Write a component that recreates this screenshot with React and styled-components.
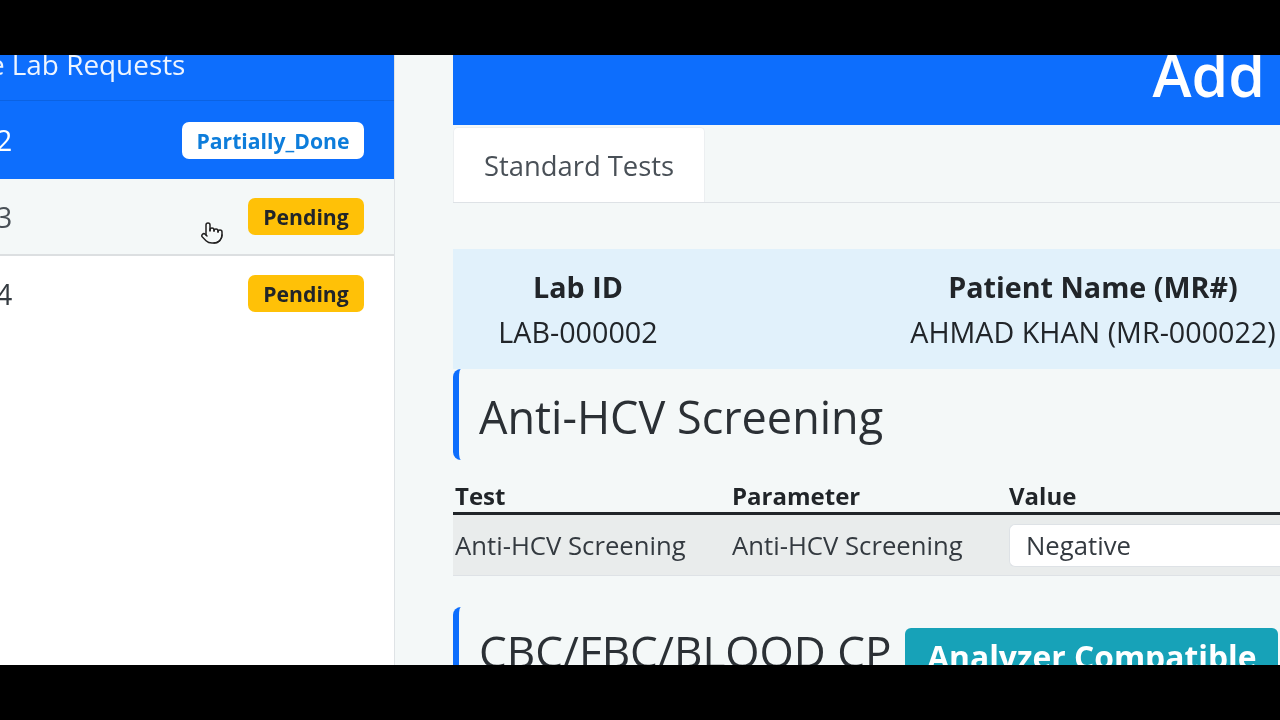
import React from 'react'
import styled, { createGlobalStyle } from 'styled-components'
import { Pointer } from 'lucide-react'

const Global = createGlobalStyle`
  html, body { margin: 0; padding: 0; background: #000; }
  body { font-family: 'Open Sans', 'Noto Sans', sans-serif; color: #212529; }
`

const Screen = styled.div`
  width: 1280px;
  height: 720px;
  padding: 55px 0;
  box-sizing: border-box;
  background: #000;
`

const Frame = styled.div`
  position: relative;
  display: flex;
  height: 610px;
  overflow: hidden;
  background: #f4f8f8;
  filter: blur(0.4px);
`

const Sidebar = styled.aside`
  flex: 0 0 395px;
  box-sizing: border-box;
  background: #fff;
  border-right: 1px solid #dfe3e6;
  overflow: hidden;
`

const SideList = styled.div`
  width: 594px;
  margin-left: -200px;
`

const SideHeader = styled.div`
  height: 46px;
  box-sizing: border-box;
  background: #0d6efd;
  border-bottom: 1px solid #0b62e2;
  color: #eef5ff;
  font-size: 27.9px;
  line-height: 18px;
  padding-left: 127px;
  white-space: nowrap;
`

const Row = styled.div`
  display: flex;
  justify-content: space-between;
  align-items: center;
  box-sizing: border-box;
  height: ${p => p.$height}px;
  padding: 0 30px 0 54px;
  font-size: 28.5px;
  background: ${p => p.$bg};
  color: ${p => p.$color};
  border-bottom: ${p => p.$line ? '2px solid #dcdfe1' : 'none'};
`

const Badge = styled.span`
  display: flex;
  align-items: center;
  justify-content: center;
  height: 37px;
  width: ${p => p.$width}px;
  border-radius: 7px;
  font-size: 21.2px;
  font-weight: 700;
  background: ${p => p.$bg};
  color: ${p => p.$color};
`

const Main = styled.main`
  flex: 1;
  min-width: 0;
  padding-left: 58px;
  overflow: hidden;
`

const TopBar = styled.div`
  height: 70px;
  background: #0d6efd;
  color: #fff;
  display: flex;
  justify-content: flex-end;
  align-items: flex-start;
  padding-right: 15px;
  font-size: 59px;
  font-weight: 600;
  line-height: 38px;
  overflow: hidden;
`

const Tabs = styled.div`
  display: flex;
  height: 78px;
  box-sizing: border-box;
  border-bottom: 1px solid #dee2e6;
`

const Tab = styled.div`
  margin-top: 2px;
  width: 252px;
  box-sizing: border-box;
  background: #fff;
  border: 1px solid #eceff1;
  border-bottom: none;
  border-radius: 5px 5px 0 0;
  display: flex;
  align-items: center;
  justify-content: center;
  font-size: 27.4px;
  color: #495057;
`

const InfoBand = styled.div`
  margin-top: 46px;
  height: 120px;
  display: grid;
  grid-template-columns: 250px 780px;
  background: #e1f1fb;
  padding-top: 15px;
  box-sizing: border-box;
`

const InfoCell = styled.div`
  text-align: center;
  white-space: nowrap;
  font-size: 28.7px;
  line-height: 45px;
`

const InfoLabel = styled.div`
  font-weight: 700;
`

const SectionHead = styled.div`
  display: flex;
  align-items: ${p => p.$top ? 'flex-start' : 'center'};
  gap: 14px;
  height: ${p => p.$height}px;
  margin-top: ${p => p.$gap}px;
  padding-left: 20px;
  border-left: 6px solid #0d6efd;
  border-radius: 8px 0 0 8px;
  box-sizing: border-box;
`

const SectionTitle = styled.h2`
  margin: 0;
  font-size: ${p => p.$size}px;
  font-weight: 500;
  white-space: nowrap;
  color: #2b3035;
  padding-top: ${p => p.$pad || 0}px;
`

const Compatible = styled.span`
  display: flex;
  justify-content: center;
  width: 373px;
  height: 70px;
  margin-top: 21px;
  flex: none;
  border-radius: 6px;
  background: #17a2b8;
  color: #fff;
  font-size: 31.8px;
  font-weight: 700;
  line-height: 58px;
  white-space: nowrap;
`

const TestTable = styled.div`
  margin-top: 10px;
`

const TestRow = styled.div`
  display: grid;
  grid-template-columns: 277px 277px 1fr;
  align-items: center;
  padding-left: 2px;
  padding-top: ${p => p.$head ? 8 : 0}px;
  font-size: ${p => p.$head ? 24 : 25.7}px;
  height: ${p => p.$height}px;
  font-weight: ${p => p.$head ? 700 : 400};
  background: ${p => p.$head ? 'transparent' : '#e9ecec'};
  border-bottom: ${p => p.$head ? '3px solid #212529' : '1px solid #dee2e6'};
  box-sizing: border-box;
  color: ${p => p.$head ? '#212529' : '#343a40'};
`

const ValueBox = styled.div`
  height: 43px;
  box-sizing: border-box;
  background: #fff;
  border: 1px solid #dee2e6;
  border-right: none;
  border-radius: 6px 0 0 6px;
  padding-left: 16px;
  display: flex;
  align-items: center;
`

const Cursor = styled.div`
  position: absolute;
  left: 200px;
  top: 166px;
  width: 24px;
  height: 24px;
  color: #222;
  filter: drop-shadow(0 0 1px #fff);
`

export default function App() {
  return (
    <Screen>
      <Global />
      <Frame>
        <Sidebar>
          <SideList>
            <SideHeader>Active Lab Requests</SideHeader>
            <Row $height={78} $bg="#0d6efd" $color="#fff">
              <span>LAB-000002</span>
              <Badge $width={182} $bg="#fff" $color="#0d7ddb">Partially_Done</Badge>
            </Row>
            <Row $height={77} $bg="#f4f8f8" $color="#495057" $line>
              <span>LAB-000003</span>
              <Badge $width={116} $bg="#ffc107" $color="#212529">Pending</Badge>
            </Row>
            <Row $height={75} $bg="#fff" $color="#343a40">
              <span>LAB-000004</span>
              <Badge $width={116} $bg="#ffc107" $color="#212529">Pending</Badge>
            </Row>
          </SideList>
        </Sidebar>
        <Main>
          <TopBar>Add</TopBar>
          <Tabs>
            <Tab>Standard Tests</Tab>
          </Tabs>
          <InfoBand>
            <InfoCell>
              <InfoLabel>Lab ID</InfoLabel>
              LAB-000002
            </InfoCell>
            <InfoCell>
              <InfoLabel>Patient Name (MR#)</InfoLabel>
              AHMAD KHAN (MR-000022)
            </InfoCell>
          </InfoBand>
          <SectionHead $height={91} $gap={0}>
            <SectionTitle $size={45} $pad={4}>Anti-HCV Screening</SectionTitle>
          </SectionHead>
          <TestTable>
            <TestRow $head $height={45}>
              <span>Test</span>
              <span>Parameter</span>
              <span>Value</span>
            </TestRow>
            <TestRow $height={61}>
              <span>Anti-HCV Screening</span>
              <span>Anti-HCV Screening</span>
              <ValueBox>Negative</ValueBox>
            </TestRow>
          </TestTable>
          <SectionHead $height={91} $gap={31} $top>
            <SectionTitle $size={44} $pad={14}>CBC/FBC/BLOOD CP</SectionTitle>
            <Compatible>Analyzer Compatible</Compatible>
          </SectionHead>
        </Main>
        <Cursor><Pointer size={24} strokeWidth={1.5} /></Cursor>
      </Frame>
    </Screen>
  )
}
